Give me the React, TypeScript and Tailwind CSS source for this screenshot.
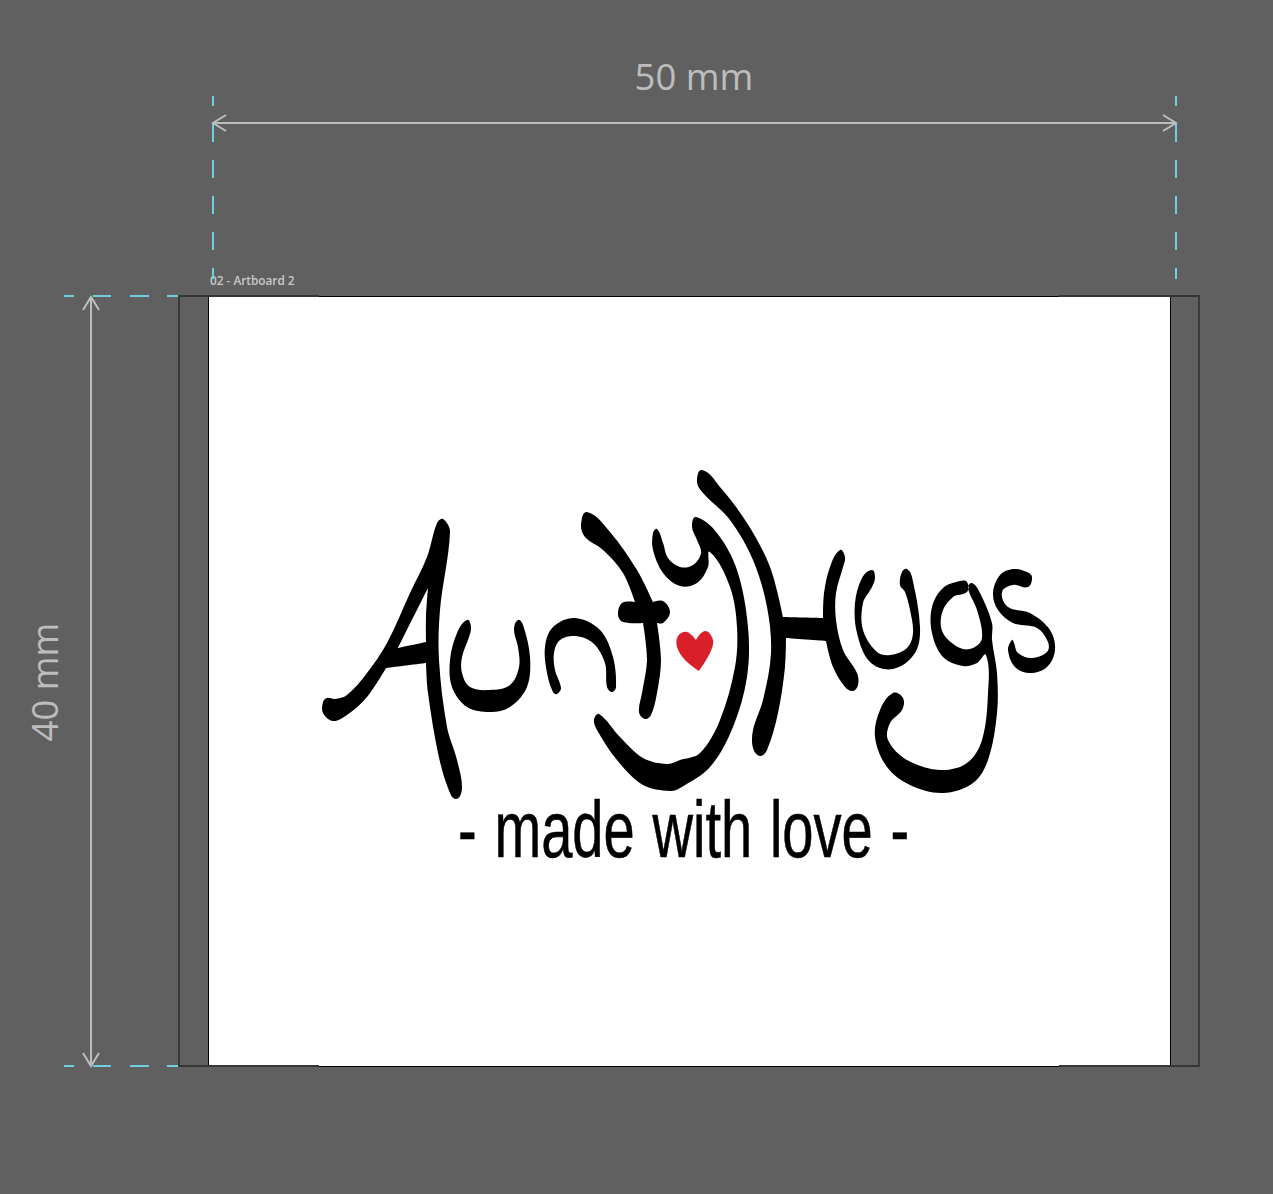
// closed smooth outline; a point written twice in a row is a sharp corner
const smooth = (s: string) => {
  const raw = s.trim().split(/\s+/).map((c) => c.split(",").map(Number))
  const p: { x: number; y: number; corner: boolean }[] = []
  raw.forEach(([x, y]) => {
    const last = p[p.length - 1]
    if (last && last.x === x && last.y === y) last.corner = true
    else p.push({ x, y, corner: false })
  })
  const n = p.length
  const tangent = (i: number) => {
    const a = p[(i - 1 + n) % n]
    const c = p[(i + 1) % n]
    const dx = c.x - a.x
    const dy = c.y - a.y
    const len = Math.hypot(dx, dy) || 1
    return p[i].corner ? [0, 0] : [dx / len, dy / len]
  }
  let d = `M${p[0].x} ${p[0].y}`
  for (let i = 0; i < n; i++) {
    const b = p[i]
    const c = p[(i + 1) % n]
    const seg = Math.hypot(c.x - b.x, c.y - b.y) / 3
    const t1 = tangent(i)
    const t2 = tangent((i + 1) % n)
    d += `C${(b.x + t1[0] * seg).toFixed(1)} ${(b.y + t1[1] * seg).toFixed(1)} ${(c.x - t2[0] * seg).toFixed(1)} ${(c.y - t2[1] * seg).toFixed(1)} ${c.x} ${c.y}`
  }
  return d + "Z"
}

// wordmark strokes, in page pixels
const strokes = [
  // A
  "443,519 450,532 440,610 439,660 447,727 457,760 462,788 456,799 448,788 438,753 428,693 426,663 426,663 386,668 386,668 367,697 347,715 333,721 323,713 323,702 327,698 335,699 347,695 367,673 387,643 410,593 427,557 437,523",
  "428,588 428,588 398,648 398,648 426,642 426,642 426,617",
  // u
  "467,620 471,627 469,637 462,657 462,673 470,687 490,690 510,685 519,667 518,647 514,630 518,620 523,625 530,657 527,687 510,707 490,712 467,707 452,687 450,660 457,633",
  // n
  "557,694 561,688 555,670 554,653 560,640 575,636 593,643 605,663 607,687 612,692 616,687 613,657 600,630 575,618 553,627 545,647 547,673 553,692",
  // t
  "587,512 610,532 637,570 653,602 653,602 663,601 670,612 663,623 657,623 657,623 661,660 657,693 651,715 645,719 639,712 642,693 647,660 643,623 643,623 623,622 618,615 622,603 635,602 635,602 623,573 603,550 585,537 581,525",
  // y and smile
  "657,529 663,543 668,558 680,567 693,565 701,553 697,540 692,527 696,517 717,533 737,570 748,627 747,677 733,727 710,767 680,788 670,791 643,785 617,760 597,730 594,720 599,714 620,737 643,758 667,764 680,760 700,753 720,720 735,667 737,627 730,587 710,552 708,567 697,583 680,586 663,573 653,550 653,533",
  // outer curve and H
  "702,470 720,487 747,523 770,567 783,617 783,617 823,618 823,618 824,593 830,567 840,550 845,557 843,567 836,593 836,620 843,650 857,673 858,685 853,691 845,687 833,667 826,641 826,641 786,638 786,638 785,667 778,713 767,750 760,756 753,748 753,730 763,700 771,653 767,607 753,560 730,520 703,493 697,482",
  // u
  "872,570 875,578 872,587 863,603 863,630 877,652 890,655 907,648 913,633 910,610 905,592 900,585 902,572 907,569 912,577 920,627 915,653 893,669 870,662 857,633 855,603 862,578",
  // g
  "967,582 967,592 953,597 942,613 943,633 960,648 973,648 982,638 977,610 968,588 972,583 980,593 992,623 992,640 997,673 997,713 988,760 973,783 943,793 910,785 887,767 875,737 880,710 893,693 903,698 902,710 890,723 888,740 907,760 940,770 967,763 982,740 988,693 986,655 977,663 963,666 943,657 932,633 932,607 943,588 960,581",
  // s
  "1032,577 1028,587 1013,585 1002,592 1008,607 1030,613 1050,630 1055,650 1047,667 1030,673 1015,667 1008,650 1012,640 1014,643 1018,653 1032,658 1047,652 1048,642 1037,628 1013,623 998,610 993,593 1000,575 1013,569 1027,572",
]

const heart = "687,632 696,640 696,640 705,631 713,640 710,653 699,671 699,671 685,660 677,647 678,636"

function Logo() {
  return (
    <svg viewBox="310 460 760 345" className="block w-[760px] h-[345px]" role="img" aria-label="Aunty Hugs">
      <path fillRule="evenodd" fill="#000" d={strokes.map(smooth).join("")} />
      <path fill="#d9202a" d={smooth(heart)} />
    </svg>
  )
}

function Guides() {
  return (
    <svg viewBox="0 0 1273 1194" className="absolute inset-0 w-[1273px] h-[1194px] pointer-events-none">
      <g stroke="#6fd0e0" strokeWidth="2" fill="none">
        <path d="M213 96V106M213 124V142M213 160V178M213 196V214M213 232V250M213 268V279" />
        <path d="M1176 96V106M1176 124V142M1176 160V178M1176 196V214M1176 232V250M1176 268V279" />
        <path d="M64 296H74M93 296H111M130 296H149M167 296H178" />
        <path d="M64 1066H74M93 1066H111M130 1066H149M167 1066H178" />
      </g>
      <g stroke="#bdbdbd" strokeWidth="2" fill="none">
        <path d="M213 123H1176M226 115L213 123L226 131M1163 115L1176 123L1163 131" />
        <path d="M91 297V1066M83 310L91 297L99 310M83 1053L91 1066L99 1053" />
      </g>
      <g stroke="#363636" strokeWidth="2" fill="none">
        <path d="M179 296H319M1059 296H1199M179 1066H319M1059 1066H1199" />
      </g>
    </svg>
  )
}

export default function App() {
  return (
    <div className="relative w-[1273px] h-[1194px] overflow-hidden bg-[#606060] font-['Open_Sans',sans-serif]">
      <div className="absolute left-[578px] top-[54px] w-[232px] text-center text-[36.5px] leading-[44px] text-[#bdbdbd]">50 mm</div>
      <div className="absolute left-[-72px] top-[660px] w-[232px] text-center text-[36.5px] leading-[44px] text-[#bdbdbd] -rotate-90">40 mm</div>
      <div className="absolute left-[210px] top-[273px] text-[11.8px] leading-[15px] font-semibold text-[#c9c9c9]">02 - Artboard 2</div>

      {/* artboard with its bleed */}
      <div className="absolute left-[178px] top-[295px] w-[1022px] h-[772px] border-x-2 border-[#3b3b3b] pt-px px-[28px]">
        <div className="w-[963px] h-[771px] bg-white border border-black flex flex-col pl-[101px] pt-[163px]">
          <Logo />
          <div className="w-[760px] pr-[18px] -mt-[11px] text-center text-black whitespace-nowrap text-[79px] leading-[72px] font-['Liberation_Sans_Narrow','Liberation_Sans',sans-serif] scale-x-[.71] [word-spacing:3px] [-webkit-text-stroke:0.6px_#000]">
            - made with love -
          </div>
        </div>
      </div>

      <Guides />
    </div>
  )
}
